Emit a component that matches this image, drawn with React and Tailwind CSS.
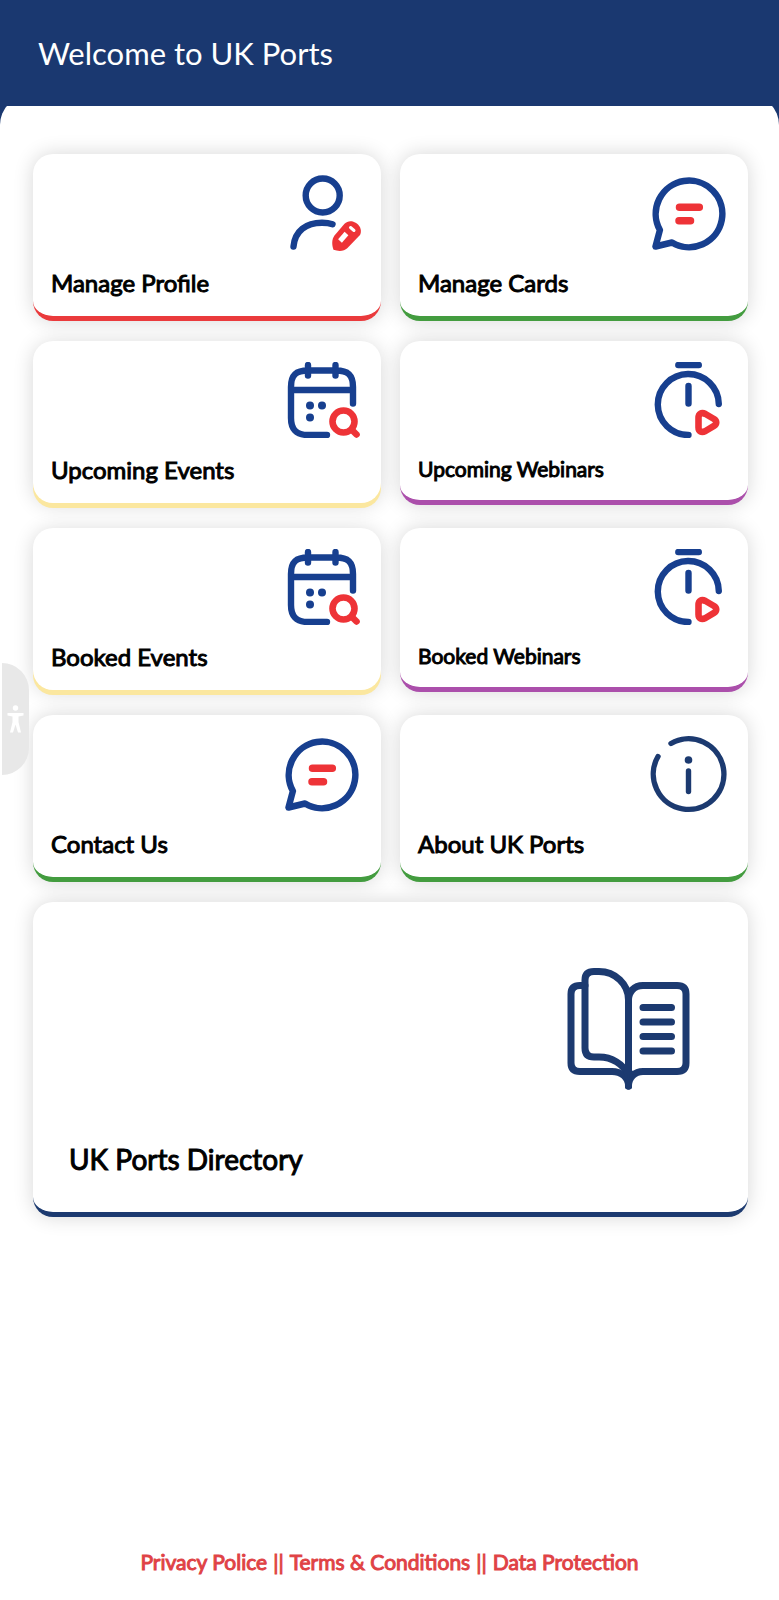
import React from "react";

function ProfileIcon() {
  return (
    <svg viewBox="0 0 76 76" className="size-full overflow-visible" fill="none" strokeLinecap="round">
      <circle cx="38.700" cy="20.500" r="17" stroke="#173f8f" strokeWidth="6.400" />
      <path d="M9.500 71.500C11 56 22 47.800 38 47.800C42 47.800 45 48 48.500 49.200" stroke="#173f8f" strokeWidth="6.400" />
      <path
        d="M60.500 48.800C67 41.500 80.500 50.500 76 60L63.500 73C60 76.500 54.500 76.500 49.500 74.800C47.500 69 47.800 64.500 50.500 60.500Z"
        fill="#ee3337"
      />
      <path d="M56 66L62.500 58.500" stroke="white" strokeWidth="5" strokeLinecap="butt" />
      <path d="M66.500 52.500L70 55.500" stroke="white" strokeWidth="3" />
    </svg>
  );
}

function ChatIcon() {
  return (
    <svg viewBox="0 0 76 76" className="size-full" fill="none" strokeLinecap="round" strokeLinejoin="round">
      <path
        d="M8.900 55A33.300 33.300 0 1 1 21 67.500L4.500 71.500Z"
        stroke="#173f8f"
        strokeWidth="6.500"
      />
      <path d="M28.500 32.300H48.300M28 45.700H39.500" stroke="#ee3337" strokeWidth="7.500" />
    </svg>
  );
}

function CalendarIcon() {
  return (
    <svg viewBox="0 0 76 76" className="size-full" fill="none" strokeLinecap="round" strokeLinejoin="round">
      <path
        d="M43 73H24C12 73 7 67 7 56V25C7 13 12 8.500 24 8.500H52C64 8.500 69 13 69 25V41.500M7 28H69M24 3V13.500M51.500 3V13.500"
        stroke="#173f8f"
        strokeWidth="6.400"
      />
      <circle cx="26" cy="43.500" r="4" fill="#173f8f" />
      <circle cx="38" cy="43.500" r="4" fill="#173f8f" />
      <circle cx="26" cy="55.500" r="4" fill="#173f8f" />
      <circle cx="59.500" cy="59.500" r="11" stroke="#ee3337" strokeWidth="6.600" />
      <path d="M68.500 68.500L72.500 72.500" stroke="#ee3337" strokeWidth="6.600" />
    </svg>
  );
}

function StopwatchIcon() {
  return (
    <svg viewBox="0 0 76 76" className="size-full" fill="none" strokeLinecap="round" strokeLinejoin="round">
      <path
        d="M27.300 3H47.800M37.500 24V41.500M37.500 73A30.500 30.500 0 1 1 67.800 42"
        stroke="#173f8f"
        strokeWidth="6.400"
      />
      <path
        d="M47.500 56C47.500 51.500 50.500 50 54.500 52L63 57C66 59 66 62 63 63.800L54.500 69C50.500 71 47.500 69.500 47.500 65.500Z"
        stroke="#ee3337"
        strokeWidth="6.600"
      />
    </svg>
  );
}

function InfoIcon() {
  return (
    <svg viewBox="0 0 76 76" className="size-full overflow-visible" fill="none" strokeLinecap="round">
      <path d="M20 7.500A35.300 35.300 0 1 1 7 20.500" stroke="#1c3a70" strokeWidth="5.400" />
      <path d="M37.500 35V55.500" stroke="#1c3a70" strokeWidth="5.400" />
      <circle cx="37.500" cy="24" r="3.800" fill="#1c3a70" />
    </svg>
  );
}

function BookIcon() {
  return (
    <svg
      viewBox="0 0 123 123"
      className="size-full"
      fill="none"
      stroke="#1c3a70"
      strokeWidth="7"
      strokeLinecap="round"
      strokeLinejoin="round"
    >
      <path d="M18 18.500H13Q4 18.500 4 27V96Q4 104.500 13 104.500H45C54 104.500 61.500 110 61.500 119" />
      <path d="M61.500 119V33C61.500 17 48 4.500 32 4.500H27Q18 4.500 18 13V81Q18 90 27 90H32C45 90 56 97 61.500 108" />
      <path d="M61.500 33C61.500 25 67 18.500 76 18.500H110Q119 18.500 119 27V96Q119 104.500 110 104.500H76C68 104.500 61.500 110 61.500 119" />
      <path d="M61.500 119L58 105H65Z" fill="#1c3a70" strokeWidth="3" />
      <path d="M76 40.500H104.500M76 55H104.500M76 69.500H104.500M76 84H104.500" />
    </svg>
  );
}

const accents = {
  red: "border-b-[5px] border-[#ea3a3c] shadow-[0_0_20px_rgba(0,0,0,0.16)]",
  green: "border-b-[5px] border-[#439c3f] shadow-[0_0_20px_rgba(0,0,0,0.16)]",
  purple: "border-b-[5px] border-[#ab4fab] shadow-[0_0_20px_rgba(0,0,0,0.16)]",
  yellow: "mb-[5px] shadow-[0_5px_0_#fbe79f,0_2px_20px_rgba(0,0,0,0.16)]",
};

const cards = [
  { title: "Manage Profile", icon: ProfileIcon, accent: "red" },
  { title: "Manage Cards", icon: ChatIcon, accent: "green" },
  { title: "Upcoming Events", icon: CalendarIcon, accent: "yellow" },
  { title: "Upcoming Webinars", icon: StopwatchIcon, accent: "purple", small: true },
  { title: "Booked Events", icon: CalendarIcon, accent: "yellow" },
  { title: "Booked Webinars", icon: StopwatchIcon, accent: "purple", small: true },
  { title: "Contact Us", icon: ChatIcon, accent: "green" },
  { title: "About UK Ports", icon: InfoIcon, accent: "green" },
];

const links = ["Privacy Police", "Terms & Conditions", "Data Protection"];

function Card({ title, icon: Icon, accent, small }) {
  return (
    <a
      href="#"
      className={`flex flex-col gap-3.5 rounded-[20px] bg-white px-[18px] pt-[21px] pb-[15px] ${accents[accent]}`}
    >
      <span className="mr-[3px] size-[76px] self-end">
        <Icon />
      </span>
      <span className={small ? "text-[21px] leading-[33px]" : "text-2xl leading-9"}>{title}</span>
    </a>
  );
}

function App() {
  return (
    <div className="flex min-h-screen flex-col bg-[#1a3870] font-['Lato',sans-serif] text-black">
      <header className="relative z-10 bg-[#1a3870] px-[38px] py-8">
        <h1 className="text-[31px] leading-[42px] text-white">Welcome to UK Ports</h1>
      </header>

      <div className="-mt-[11px] flex flex-1 flex-col rounded-t-[30px] bg-white pt-[59px] [-webkit-text-stroke:1px]">
        <main className="grid grid-cols-2 items-start gap-x-[19px] gap-y-5 pr-[31px] pl-[33px]">
          {cards.map((card) => (
            <Card key={card.title} {...card} />
          ))}

          <a
            href="#"
            className="col-span-2 flex flex-col gap-12 rounded-[20px] border-b-[5px] border-[#1c3a70] bg-white px-9 pt-[65px] pb-8 shadow-[0_0_20px_rgba(0,0,0,0.16)]"
          >
            <span className="mr-[22px] size-[123px] self-end">
              <BookIcon />
            </span>
            <span className="text-[28px] leading-[42px]">UK Ports Directory</span>
          </a>
        </main>

        <footer className="mt-auto flex flex-wrap justify-center gap-x-1.5 px-8 pt-8 pb-[22px] text-[21px] leading-8 text-[#e04245]">
          {links.map((link, index) => (
            <React.Fragment key={link}>
              {index > 0 && <span>||</span>}
              <a href="#">{link}</a>
            </React.Fragment>
          ))}
        </footer>
      </div>

      <button
        type="button"
        aria-label="Accessibility"
        className="fixed top-[663px] left-0.5 z-20 flex h-28 w-[27px] items-center justify-center rounded-r-[27px] bg-[#e8e8e8]"
      >
        <svg viewBox="0 0 18 28" className="h-7 w-[18px]" fill="white">
          <circle cx="8.500" cy="3" r="2.700" />
          <path d="M0.500 8H16.500V10.500L11.500 11.500V17L14 27.500H11L8.500 19.500L6 27.500H3L5.500 17V11.500L0.500 10.500Z" />
        </svg>
      </button>
    </div>
  );
}

export default App;
